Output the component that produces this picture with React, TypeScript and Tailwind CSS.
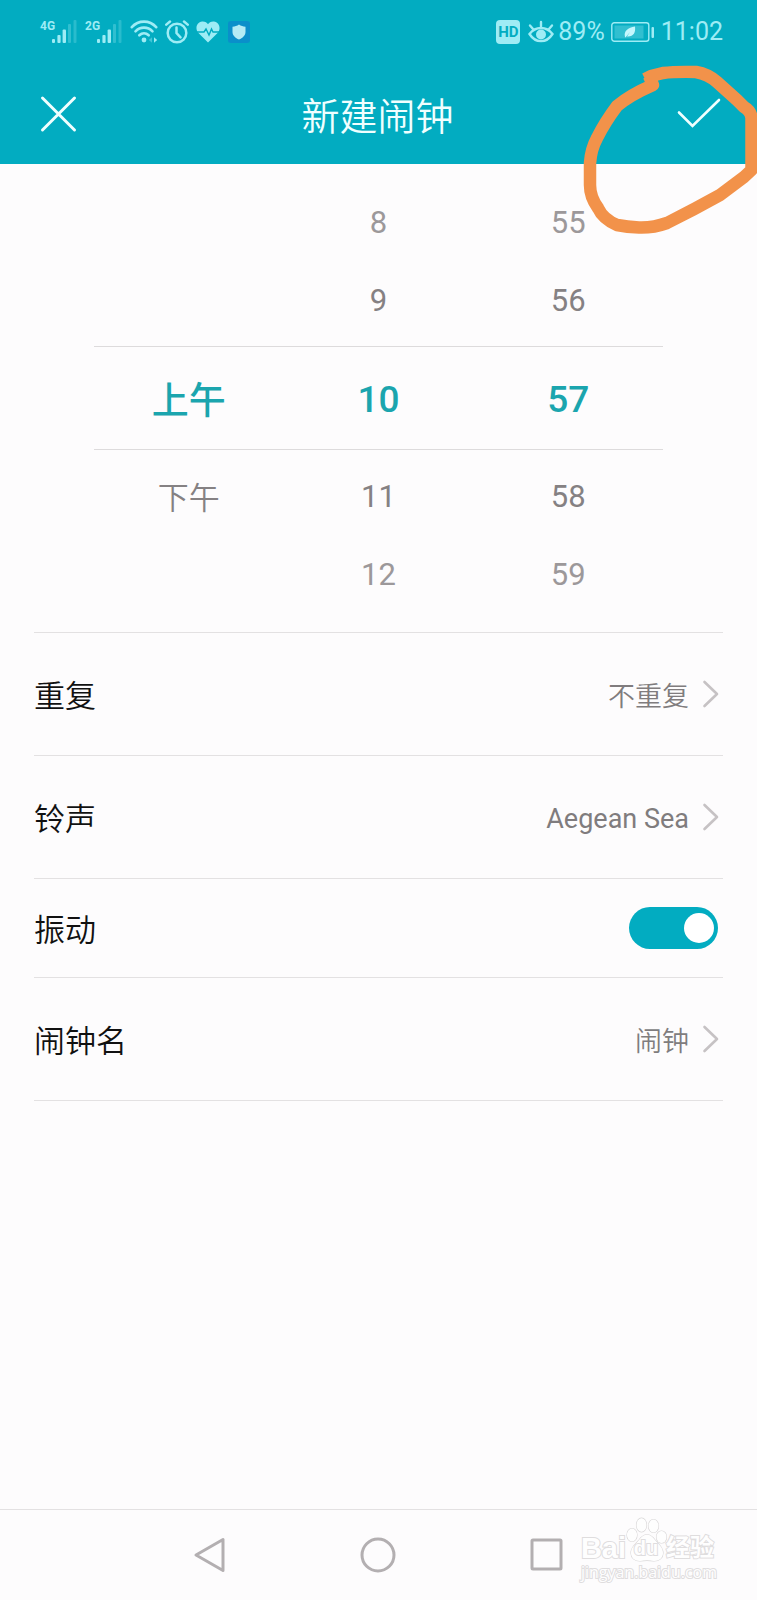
import { useState, type ReactNode } from "react";

const HOURS = ["8", "9", "10", "11", "12"];
const MINUTES = ["55", "56", "57", "58", "59"];
const PERIODS = ["", "", "上午", "下午", ""];

function Signal({ label }: { label: string }) {
  return (
    <span className="flex items-start">
      <span className="w-3 text-xs leading-3 font-bold">{label}</span>
      <svg width="25" height="24" viewBox="0 0 25 24" fill="currentColor" aria-hidden="true">
        <rect x="0" y="19" width="3" height="4" rx="1" />
        <rect x="5.4" y="15" width="3.2" height="8" rx="1" />
        <rect x="10.6" y="9.5" width="3.4" height="13.5" rx="1" />
        <rect x="16" y="4" width="3" height="19" rx="1" opacity="0.3" />
        <rect x="21.5" y="0" width="3" height="23" rx="1" opacity="0.25" />
      </svg>
    </span>
  );
}

function StatusBar() {
  return (
    <div className="flex h-16 items-center justify-between pr-[34px] pl-10 text-[#9eecf5]">
      <div className="flex items-center gap-2">
        <Signal label="4G" />
        <Signal label="2G" />
        <div className="flex items-center gap-[7px]">
          <svg width="28" height="24" viewBox="0 0 28 24" fill="none" stroke="currentColor" strokeWidth="2.6" strokeLinecap="round" aria-label="Wi-Fi">
            <path d="M1.8 7.2C8.5-.2 19.5-.2 26.2 7.2" />
            <path d="M5.5 11.3c4.8-4.9 12.2-4.9 17 0" />
            <path d="M9.3 15.3c2.8-2.6 6.6-2.6 9.4 0" />
            <circle cx="14" cy="20" r="2.4" fill="currentColor" stroke="none" />
            <path d="M22 17.2 18.8 20l3.2 2.8z" fill="currentColor" stroke="none" opacity="0.4" />
            <path d="M24 17.2 27.2 20 24 22.8z" fill="currentColor" stroke="none" />
          </svg>
          <svg width="24" height="24" viewBox="0 0 24 24" fill="none" stroke="currentColor" strokeWidth="2.5" strokeLinecap="round" aria-label="闹钟">
            <circle cx="12" cy="13" r="9.3" />
            <path d="M11.5 7.5V13l4 4.3M1.3 4.6 5 1.5M22.7 4.6 19 1.5" />
          </svg>
          <svg width="24" height="24" viewBox="0 0 24 24" aria-label="健康">
            <path d="M12 22.5 2.2 12.7C-1 9 .2 2 6.2 1.4 9 1.2 11 2.600 12 4.200c1-1.600 3-3 5.800-2.800 6 .6 7.200 7.600 4 11.300z" fill="currentColor" />
            <path d="M0 12h8l2-3 3 6 2.500-6 1.500 3h7" fill="none" stroke="#02acc1" strokeWidth="1.4" />
          </svg>
          <svg width="24" height="24" viewBox="0 0 24 24" aria-label="安全">
            <rect x="1" y="1" width="22" height="22" rx="3" fill="#0a8fca" />
            <path d="M12 4.500c2 1.500 4 2 6.500 2.200V12c0 3.500-3 6-6.500 7.500C8.500 18 5.500 15.500 5.500 12V6.700C8 6.500 10 6 12 4.500z" fill="#b4ebf5" />
          </svg>
        </div>
      </div>
      <div className="flex items-center">
        <span className="flex h-6 w-6 items-center justify-center rounded bg-[#9eecf5] text-[15px] font-bold text-[#02acc1]">
          HD
        </span>
        <svg className="mr-1 ml-2" width="26" height="24" viewBox="0 0 26 24" fill="none" stroke="currentColor" strokeWidth="2.4" strokeLinecap="round" aria-label="护眼">
          <path d="M1.500 14C7.500 6 18.500 6 24.500 14 18.500 23.500 7.500 23.500 1.500 14z" />
          <circle cx="13" cy="14.500" r="3.800" fill="currentColor" />
          <path d="M13 2v4.500M2 5.500 5 9M24 5.500 21 9" />
        </svg>
        <span className="text-[25px] leading-8">89%</span>
        <svg className="mx-1.5" width="44" height="22" viewBox="0 0 44 22" fill="none" aria-label="电量">
          <rect x="0.8" y="1.8" width="37" height="18.4" rx="2.5" stroke="currentColor" strokeWidth="1.4" />
          <rect x="3.5" y="4.5" width="29" height="13" fill="currentColor" opacity="0.3" />
          <rect x="40.5" y="6" width="2.5" height="11" rx="1" fill="currentColor" />
          <path d="M14 16c-1.500-6 3-9.500 10-10.500.8 6-1.500 10.500-8 10l3-4.500-4.500 5.500z" fill="#c5f7fd" />
        </svg>
        <time className="text-[25px] leading-8">11:02</time>
      </div>
    </div>
  );
}

function Wheel({ label, items, cjk = false }: { label: string; items: string[]; cjk?: boolean }) {
  const tones = ["text-[#9c989a]", "text-[#858183]", "text-[#1ba5ae]", "text-[#858183]", "text-[#9c989a]"];
  return (
    <ul aria-label={label} className="flex flex-1 flex-col pt-5 pb-[18px]">
      {items.map((item, i) => (
        <li key={i} className={i === 2 ? "mt-2 mb-1.5 h-26" : "h-[78px]"}>
          {item && (
            <button
              type="button"
              className={`${tones[i]} ${i === 2 ? "text-[37px] font-medium" : "text-[31px]"} ${
                cjk ? (i === 2 ? "pt-1" : "pt-1 font-[350]") : ""
              } h-full w-full`}
            >
              {item}
            </button>
          )}
        </li>
      ))}
    </ul>
  );
}

function SettingRow({ label, value, latin = false }: { label: string; value: string; latin?: boolean }) {
  return (
    <button type="button" className="flex h-[123px] w-full items-center justify-between border-b border-[#e3e1e2] pr-1 font-[350]">
      <span className="pt-1.5 text-[31px] text-[#111111]">{label}</span>
      <span className="flex items-center gap-3 text-[27px] text-[#807c7e]">
        <span className={latin ? "pt-1 font-normal" : "pt-1.5"}>{value}</span>
        <svg width="18" height="28" viewBox="0 0 18 28" fill="none" stroke="#c6c2c4" strokeWidth="2.6" strokeLinecap="round" strokeLinejoin="round" aria-hidden="true">
          <path d="M3.5 2 16 14 3.5 26" />
        </svg>
      </span>
    </button>
  );
}

function NavButton({ label, children }: { label: string; children: ReactNode }) {
  return (
    <button type="button" aria-label={label} className="flex h-full flex-1 items-center justify-center">
      <svg width="38" height="38" viewBox="0 0 38 38" fill="none" stroke="#b3afb1" strokeWidth="3" strokeLinejoin="round">
        {children}
      </svg>
    </button>
  );
}

function Watermark() {
  return (
    <div className="pointer-events-none absolute right-10 bottom-[18px] flex flex-col text-[#fefefe] [-webkit-text-stroke:2px_#dfddde] [paint-order:stroke]">
      <div className="flex h-11 items-end font-['Liberation_Sans','Noto_Sans_CJK_SC',sans-serif] font-bold">
        <span className="text-[29px] leading-7">Bai</span>
        <span className="relative flex w-10 justify-center">
          <svg className="absolute bottom-0 left-0" width="42" height="45" viewBox="0 0 42 45" fill="#fefefe" stroke="#d8d6d7" strokeWidth="1.2" aria-hidden="true">
            <ellipse cx="6" cy="18" rx="5" ry="6.5" />
            <ellipse cx="15.5" cy="8" rx="5" ry="6.8" />
            <ellipse cx="27.5" cy="9" rx="5" ry="6.5" />
            <ellipse cx="35.5" cy="20" rx="5" ry="6" />
            <path d="M13 23c5-7 11-7 16 0 3 4 8 7 8 13 0 5-4 8-9 8-5-1-9-1-14 0-5 0-9-3-9-8 0-6 5-9 8-13z" />
          </svg>
          <span className="relative text-xl leading-7">du</span>
        </span>
        <span className="text-2xl leading-7">经验</span>
      </div>
      <span className="font-['Open_Sans',sans-serif] text-base leading-5">jingyan.baidu.com</span>
    </div>
  );
}

export default function App() {
  const [vibrate, setVibrate] = useState(true);
  return (
    <div className="relative flex min-h-screen flex-col overflow-hidden bg-[#fdfcfd] font-[Roboto,'Noto_Sans_CJK_SC',sans-serif]">
      <header className="bg-[#02acc1]">
        <StatusBar />
        <div className="flex h-25 items-center justify-between pr-9 pl-10 text-[#f0ffff]">
          <button type="button" aria-label="取消">
            <svg width="38" height="38" viewBox="0 0 38 38" fill="none" stroke="currentColor" strokeWidth="3" strokeLinecap="round">
              <path d="M2.5 3l32 32M34.5 3l-32 32" />
            </svg>
          </button>
          <h1 className="pt-1.5 text-[38px] font-[350]">新建闹钟</h1>
          <button type="button" aria-label="完成">
            <svg width="44" height="32" viewBox="0 0 44 32" fill="none" stroke="currentColor" strokeWidth="2.6" strokeLinecap="round">
              <path d="M2 14.500 15.500 28 42 2" />
            </svg>
          </button>
        </div>
      </header>

      <main className="flex-1 px-[34px]">
        <section aria-label="时间" className="border-b border-[#e3e1e2] px-15">
          <div className="relative flex">
            <Wheel label="时段" items={PERIODS} cjk />
            <Wheel label="小时" items={HOURS} />
            <Wheel label="分钟" items={MINUTES} />
            <div className="pointer-events-none absolute inset-x-0 top-[182px] h-26 border-y border-[#dddbdc]" />
          </div>
        </section>
        <SettingRow label="重复" value="不重复" />
        <SettingRow label="铃声" value="Aegean Sea" latin />
        <label className="flex h-[99px] items-center justify-between border-b border-[#e3e1e2] pr-[5px]">
          <span className="pt-1.5 text-[31px] font-[350] text-[#111111]">振动</span>
          <input
            type="checkbox"
            role="switch"
            checked={vibrate}
            onChange={(e) => setVibrate(e.target.checked)}
            className="flex h-[42px] w-[89px] appearance-none items-center rounded-full bg-[#c6c2c4] px-1 before:h-[30px] before:w-[30px] before:rounded-full before:bg-white checked:justify-end checked:bg-[#02acc1]"
          />
        </label>
        <SettingRow label="闹钟名" value="闹钟" />
      </main>

      <nav className="flex h-[91px] items-center border-t border-[#e3e1e2] px-[126px]">
        <NavButton label="返回">
          <path d="M5 19 32 3.500v31z" />
        </NavButton>
        <NavButton label="主页">
          <circle cx="19" cy="19" r="16" />
        </NavButton>
        <NavButton label="最近任务">
          <rect x="4" y="4" width="29" height="29" rx="1" />
        </NavButton>
      </nav>

      <Watermark />

      <svg className="pointer-events-none absolute top-[60px] right-0" width="177" height="180" viewBox="580 60 177 180" fill="none" stroke="#f2924a" strokeWidth="12.5" strokeLinejoin="round" aria-hidden="true">
        <path d="M645 79 651 76 663 73Q675 71.500 696 72 708 74 717 82L737 100 744 107Q751 111 751.500 118L751.500 170 744 177 720 195Q695 209 667 223 653 228 639 227.500 627 227 617 225 603 219 598 208 590 197 590 185L590 163Q591 149 597 138 605 122 617 106 630 95 653 85L649 76" />
      </svg>
    </div>
  );
}
